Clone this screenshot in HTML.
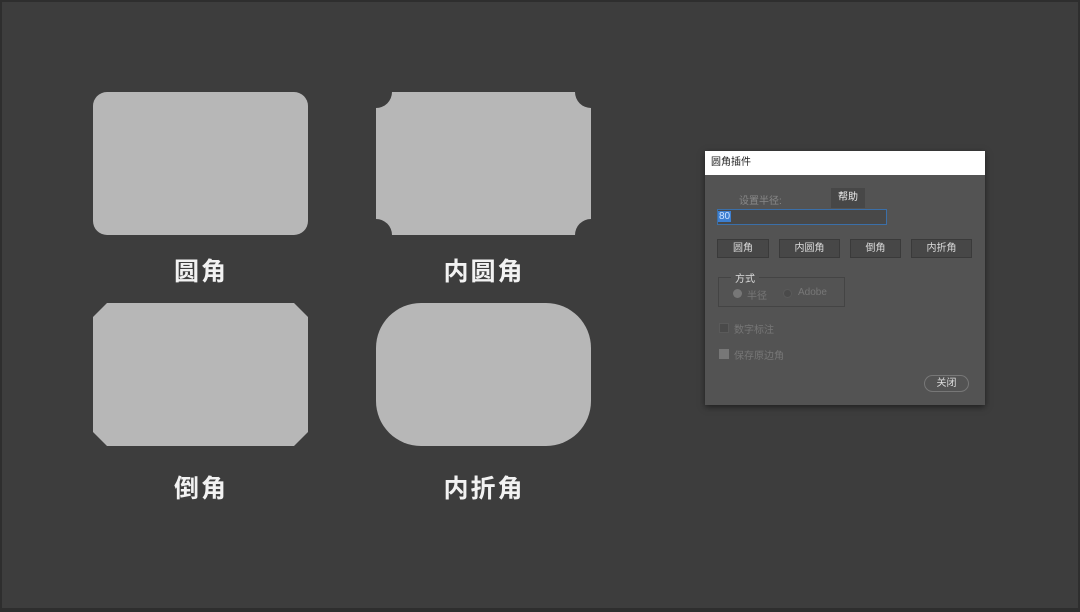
<!DOCTYPE html>
<html><head><meta charset="utf-8"><style>
body{margin:0;width:1080px;height:612px;background:#2e2e2e;overflow:hidden;font-family:"Liberation Sans","Noto Sans CJK SC",sans-serif;position:relative}
.bg{position:absolute;left:2px;top:2px;width:1076px;height:606px;background:#3d3d3d}
.lbl{position:absolute;color:#f2f2f2;font-size:25px;letter-spacing:2px;width:200px;text-align:center;font-weight:bold}
.d{position:absolute;left:705px;top:151px;width:280px;height:254px;background:#535353;box-shadow:0 2px 6px rgba(0,0,0,.5);font-size:10px;color:#888}
.t{position:absolute;left:0;top:0;width:280px;height:24px;background:#fff;color:#222;font-size:10px;line-height:24px;padding-left:6px;box-sizing:border-box}
.a{position:absolute}
.btn{position:absolute;top:88px;height:19px;background:#474747;border:1px solid #3a3a3a;box-sizing:border-box;color:#ddd;text-align:center;line-height:17px;font-size:10px}
</style></head><body>
<div class="bg"></div>
<svg class="a" style="left:0;top:0" width="1080" height="612">
<rect x="93" y="92" width="215" height="143" rx="14" fill="#b7b7b7"/>
<path d="M392 92 H575 A16 16 0 0 0 591 108 V219 A16 16 0 0 0 575 235 H392 A16 16 0 0 0 376 219 V108 A16 16 0 0 0 392 92 Z" fill="#b7b7b7"/>
<path d="M107 303 H294 L308 317 V432 L294 446 H107 L93 432 V317 Z" fill="#b7b7b7"/>
<rect x="376" y="303" width="215" height="143" rx="45" fill="#b7b7b7"/>
</svg>
<div class="lbl" style="left:101px;top:252px">圆角</div>
<div class="lbl" style="left:384px;top:252px">内圆角</div>
<div class="lbl" style="left:101px;top:469px">倒角</div>
<div class="lbl" style="left:384px;top:469px">内折角</div>
<div class="d">
<div class="t">圆角插件</div>
<div class="a" style="left:34px;top:41px;color:#888">设置半径:</div>
<div class="a" style="left:126px;top:37px;width:34px;height:20px;background:#474747;color:#eee;text-align:center;line-height:20px">帮助</div>
<div class="a" style="left:12px;top:58px;width:170px;height:16px;background:#484848;border:1px solid #3b6fa8;box-sizing:border-box"><span style="background:#3d7fd0;color:#cfe3ff;font-size:10px;line-height:14px;padding:0 1px">80</span></div>
<div class="btn" style="left:12px;width:52px">圆角</div>
<div class="btn" style="left:74px;width:61px">内圆角</div>
<div class="btn" style="left:145px;width:51px">倒角</div>
<div class="btn" style="left:206px;width:61px">内折角</div>
<div class="a" style="left:13px;top:126px;width:127px;height:30px;border:1px solid #444;box-sizing:border-box"></div>
<div class="a" style="left:26px;top:119px;background:#535353;color:#ddd;padding:0 4px">方式</div>
<div class="a" style="left:28px;top:138px;width:9px;height:9px;border-radius:50%;background:#777"></div>
<div class="a" style="left:42px;top:136px;color:#777">半径</div>
<div class="a" style="left:78px;top:138px;width:9px;height:9px;border-radius:50%;background:#4a4a4a;border:1px solid #5a5a5a;box-sizing:border-box"></div>
<div class="a" style="left:93px;top:136px;color:#777">Adobe</div>
<div class="a" style="left:14px;top:172px;width:10px;height:10px;background:#4a4a4a;border:1px solid #5a5a5a;box-sizing:border-box"></div>
<div class="a" style="left:29px;top:170px;color:#777">数字标注</div>
<div class="a" style="left:14px;top:198px;width:10px;height:10px;background:#777"></div>
<div class="a" style="left:29px;top:196px;color:#777">保存原边角</div>
<div class="a" style="left:219px;top:224px;width:45px;height:17px;border:1px solid #777;border-radius:9px;box-sizing:border-box;color:#ddd;text-align:center;line-height:15px">关闭</div>
</div>
</body></html>
